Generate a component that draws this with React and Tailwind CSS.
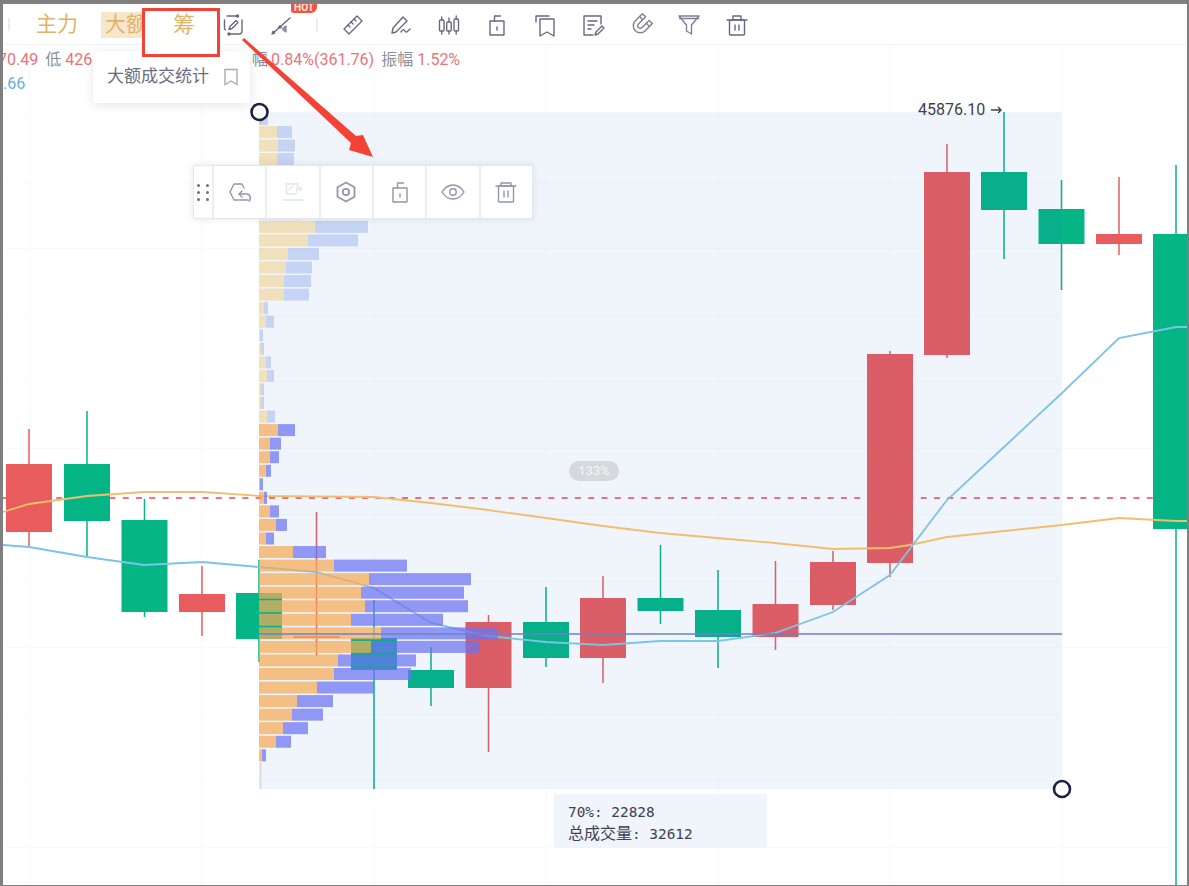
const candles = [
  [29, 464, 532, 429, 547, 'r'], [87, 464, 521, 411, 557, 'g'], [144.5, 520, 612, 499, 617, 'g'],
  [202, 594, 612, 566, 636, 'r'], [259, 593, 639, 560, 662, 'g'], [316.5, 636, 638, 512, 656, 'r'],
  [374, 638, 670, 600, 789, 'g'], [431, 670, 688, 647, 706, 'g'], [488.5, 622, 688, 615, 752, 'r'],
  [546, 622, 658, 587, 667, 'g'], [603, 598, 658, 576, 683, 'r'], [660.5, 598, 611, 545, 624, 'g'],
  [718, 610, 637, 570, 668, 'g'], [775.5, 604, 637, 561, 650, 'r'], [833, 562, 605, 551, 610, 'r'],
  [890, 354, 563, 351, 577, 'r'], [947, 172, 355, 144, 358, 'r'], [1004, 172, 210, 112, 259, 'g'],
  [1061.5, 209, 244, 180, 290, 'g'], [1119, 234, 244, 177, 255, 'r'], [1176, 234, 529, 165, 886, 'g'],
];

const rows = [
  [277, 292], [278, 295], [277, 294], [277, 292], [277, 293], [278, 296], [278, 300], [315, 368],
  [308, 358], [288, 319], [286, 312], [284, 311], [284, 309], [264, 268], [266, 274], [260, 263],
  [261, 264], [266, 271], [267, 274], [261, 264], [261, 264], [267, 275], [278, 295], [270, 281],
  [270, 279], [266, 271], [260, 263], [264, 267], [270, 279], [276, 287], [266, 274], [293, 326],
  [334, 407], [369, 471], [361, 464], [365, 468], [351, 443], [381, 498], [371, 480], [338, 416],
  [334, 411], [317, 374], [297, 333], [292, 323], [283, 308], [276, 291], [262, 266],
];

const maOrange = '3,512 29,504 87,496 144,492 203,492 260,496 374,497 431,503 488,510 546,518 603,526 660,533 717,538 775,543 833,549 890,548 910,545 947,537 1004,531 1062,525 1119,518 1176,521 1189,521';
const maBlue = '3,545 29,547 87,557 144,565 202,562 259,567 316,572 374,588 431,623 488,636 546,642 603,645 660,641 718,641 775,633 833,612 890,575 947,500 1004,447 1062,393 1119,338 1176,327 1189,327';

const gridX = [29, 201, 374, 546, 718, 890, 1062];
const gridY = [115, 182, 248, 315, 381, 448, 514, 581, 647, 714, 780, 847];

function Chart() {
  return (
    <svg className="absolute inset-0" width="1189" height="886" viewBox="0 0 1189 886">
      {gridX.map((x) => <rect key={x} x={x} y="45" width="1" height="841" fill="#f9fafb" />)}
      {gridY.map((y) => <rect key={y} x="0" y={y} width="1189" height="1" fill="#f9fafb" />)}
      <line x1="3" y1="498" x2="1189" y2="498" stroke="#f0434f" strokeWidth="1.4" strokeDasharray="6 7.3" />
      {candles.map(([c, t, b, wt, wb, k]) => {
        const col = k === 'r' ? '#e95c5e' : '#05b586';
        return (
          <g key={c} fill={col}>
            <rect x={c - 0.75} y={wt} width="1.5" height={wb - wt} />
            <rect x={c - 23} y={t} width="46" height={b - t} />
          </g>
        );
      })}
      <rect x="259" y="112" width="803" height="677" fill="#2e6fdb" opacity="0.07" />
      <polyline points={maOrange} fill="none" stroke="#f2bd6c" strokeWidth="1.8" />
      <polyline points={maBlue} fill="none" stroke="#7cc3e8" strokeWidth="1.8" />
      <rect x="259" y="113" width="9" height="12" fill="#93acec" opacity="0.45" />
      <rect x="259" y="113" width="3" height="12" fill="#f2c870" opacity="0.45" />
      {rows.map(([o, p], i) => {
        const y = 126 + 13.55 * i;
        const strong = i >= 22;
        return (
          <g key={i} opacity={strong ? 0.72 : 0.45}>
            <rect x="259" y={y} width={o - 259} height="12" fill={strong ? '#f6ab57' : '#f2c870'} />
            <rect x={o} y={y} width={p - o} height="12" fill={strong ? '#6d73f2' : '#93acec'} />
          </g>
        );
      })}
      <rect x="259.5" y="762" width="2" height="27" fill="#d9dce0" />
      <line x1="259" y1="634" x2="1062" y2="634" stroke="#6b82c8" strokeWidth="1.5" />
      <circle cx="259.5" cy="112" r="8" fill="#fff" stroke="#1e2440" strokeWidth="2.6" />
      <circle cx="1062" cy="789" r="8" fill="#fff" stroke="#1e2440" strokeWidth="2.6" />
    </svg>
  );
}

function Ic({ children, size = 24, color = '#666a80' }) {
  return (
    <svg width={size} height={size} viewBox="0 0 24 24" fill="none" stroke={color} strokeWidth="1.4" strokeLinejoin="round" strokeLinecap="round">
      {children}
    </svg>
  );
}

const topIcons = [
  <Ic key="a"><path d="M6 3h10" /><circle cx="16.5" cy="3" r="1.1" fill="#666a80" /><path d="M3.5 7v8a2 2 0 0 0 1 2" /><path d="M8 21h10a3 3 0 0 0 3-3V7" /><circle cx="8" cy="21" r="1.1" fill="#666a80" /><path d="M8 16.5l1-3 6-6 2 2-6 6z" /></Ic>,
  <Ic key="b"><path d="M3 21L21 5" /><circle cx="4.5" cy="19.5" r="1.1" fill="#666a80" /><circle cx="11" cy="14" r="1.1" fill="#666a80" /><path d="M14 15l3-2v6l-3-2z" fill="#8c90a2" stroke="#8c90a2" /></Ic>,
];

const rightIcons = [
  <Ic key="c"><path d="M3 16L16 3l5 5L8 21z" /><path d="M7 12l2 2M10 9l2 2M13 6l2 2" /></Ic>,
  <Ic key="d"><path d="M3 20l1-5L14 4l4 4L7 19z" /><path d="M12 19c2-3 3-3 4-1s2 1 5-2" /></Ic>,
  <Ic key="e"><rect x="2.5" y="7" width="4.5" height="11" rx="1" /><path d="M4.7 4v3M4.7 18v3" /><rect x="9.7" y="9" width="4.5" height="9" rx="1" /><path d="M12 5v4M12 18v3" /><rect x="17" y="6" width="4.5" height="12" rx="1" /><path d="M19.2 3v3M19.2 18v3" /></Ic>,
  <Ic key="f"><rect x="5" y="8" width="14" height="14" /><path d="M9.5 8V3h6" /><path d="M12 14v3" /></Ic>,
  <Ic key="g"><path d="M3 9V3h13" /><path d="M7 6h14v17l-7-4-7 4z" /></Ic>,
  <Ic key="h"><path d="M20 11V3H3v19h9" /><path d="M7 8h9M7 12h6M7 16h3" /><path d="M14 22l1-3 6-6 2 2-6 6z" /></Ic>,
  <Ic key="i" color="#7d8194"><g transform="rotate(45 12 12)"><path d="M5 3h4.5v10a2.5 2.5 0 0 0 5 0V3H19v10a7 7 0 0 1-14 0z" /><path d="M5 7h4.5M14.5 7H19" /></g></Ic>,
  <Ic key="j" color="#7d8194"><path d="M2 3h20l-7.5 9v9l-5-3v-6z" /><path d="M2.5 5.5h19" /></Ic>,
  <Ic key="k"><path d="M2 7h20" /><path d="M8 7V3h8v4" /><rect x="4.5" y="7" width="15" height="15" rx="1" /><path d="M10 12v5M14 12v5" /></Ic>,
];

function Toolbar() {
  return (
    <div className="relative flex h-[45px] items-center border-b border-[#f1f2f5] bg-white pt-[5px] text-[21px] text-[#e0b36b]">
      <div className="ml-[8px] h-[13px] w-[2px] bg-[#e8edf5]" />
      <span className="ml-[26px] w-[65px] leading-none">主力</span>
      <span className="flex h-[26px] w-[47px] items-center overflow-hidden whitespace-nowrap bg-[#f6e7cc] pl-[4px] leading-none">大额</span>
      <div className="ml-[61px] flex">
        {topIcons.map((ic) => (
          <div key={ic.key} className="flex w-12 items-center justify-center">{ic}</div>
        ))}
      </div>
      <div className="ml-[11px] h-[13px] w-[2px] bg-[#e8edf5]" />
      <div className="ml-[11px] flex">
        {rightIcons.map((ic) => (
          <div key={ic.key} className="flex w-12 items-center justify-center">{ic}</div>
        ))}
      </div>
    </div>
  );
}

function Stats() {
  const red = 'text-[#ea7378]';
  const gray = 'text-[#8b8f99]';
  return (
    <div className="relative text-[16px] leading-[24px]">
      <div className="mt-[3px] flex h-[24px] whitespace-nowrap">
        <div className="-ml-[2px] flex w-[254px] gap-[7px] overflow-hidden">
          <span className={red}>70.49</span>
          <span><span className={gray}>低</span> <span className={red}>42618.50</span></span>
        </div>
        <span className={gray}>幅</span>
        <span className={`${red} ml-[3px]`}>0.84%(361.76)</span>
        <span className={`${gray} ml-[7px]`}>振幅</span>
        <span className={`${red} ml-[4px]`}>1.52%</span>
      </div>
      <div className="ml-[3px] text-[#5fb3dc]">.66</div>
    </div>
  );
}

function Tooltip() {
  return (
    <div className="absolute left-[93px] top-[51px] flex h-[52px] w-[157px] items-center justify-between bg-white pl-[14px] pr-[11px] text-[17px] text-[#696e80] shadow-[0_2px_10px_rgba(40,50,80,0.12)]">
      <span className="whitespace-nowrap">大额成交统计</span>
      <svg width="16" height="18" viewBox="0 0 16 18" fill="none" stroke="#a9adb9" strokeWidth="1.4"><path d="M2 1.5h12v15l-6-3.5-6 3.5z" /></svg>
    </div>
  );
}

const flC = '#9397a7';
const floatIcons = [
  <Ic key="a" color={flC}><path d="M11 4H6l-4 8 4 8h5" /><path d="M11 4h3l2 4" /><path d="M21 21c2-1 2-7-2-7h-8" /><path d="M14 11l-3 3 3 3" /><path d="M12 20h8" /></Ic>,
  <Ic key="b" color="#dfe5f1"><path d="M5 4h12l-2 10H6z" /><path d="M8 10l4-4" /><path d="M17 9h4M19 7v4" /><path d="M2 20h20" /></Ic>,
  <Ic key="c" color={flC}><path d="M12 2.5l8.5 4.8v9.4L12 21.5l-8.5-4.8V7.3z" strokeWidth="1.8" /><circle cx="12" cy="12" r="3.2" strokeWidth="1.8" /></Ic>,
  <Ic key="d" color={flC}><rect x="5" y="8" width="14" height="14" /><path d="M9.5 8V3h6" /><path d="M12 14v3" /></Ic>,
  <Ic key="e" color={flC}><path d="M1 12c3-5 7-7 11-7s8 2 11 7c-3 5-7 7-11 7s-8-2-11-7z" /><circle cx="12" cy="12" r="3.2" /></Ic>,
  <Ic key="f" color={flC}><path d="M2 6h20" /><path d="M7 6V3h10v3" /><rect x="4.5" y="6" width="15" height="16" rx="1" /><path d="M10 11v6M14 11v6" /></Ic>,
];

function FloatBar() {
  return (
    <div className="absolute left-[193px] top-[165px] flex h-[54px] w-[340px] border border-[#e4e7ee] bg-white shadow-[0_0_8px_rgba(60,70,100,0.12)]">
      <div className="grid w-[18px] grid-cols-2 content-center justify-center gap-x-[3px] gap-y-[4px] pl-[3px]">
        {[0, 1, 2, 3, 4, 5].map((i) => <span key={i} className="h-[3px] w-[3px] rounded-full bg-[#6b7080]" />)}
      </div>
      {floatIcons.map((ic) => (
        <div key={ic.key} className="flex flex-1 items-center justify-center border-l-2 border-[#eceef2]">{ic}</div>
      ))}
    </div>
  );
}

export default function App() {
  return (
    <div className="relative h-[886px] w-[1189px] overflow-hidden bg-white font-['Roboto','Noto_Sans_CJK_SC',sans-serif]">
      <Chart />
      <Toolbar />
      <Stats />
      <Tooltip />
      <FloatBar />

      <div className="absolute left-[291px] top-0 flex h-[13px] w-[26px] items-end justify-center rounded-bl-[3px] rounded-br-[6px] bg-[#f2553d] text-[10px] font-bold leading-none text-[#ffe9e4]">HOT</div>

      <div className="absolute left-[569px] top-[461px] flex h-[20px] w-[50px] items-center justify-center rounded-full bg-[#d5d8dc] text-[13px] text-[#f4f5f6]">133%</div>

      <div className="absolute left-[918px] top-[100px] flex items-center whitespace-nowrap text-[16px] leading-[20px] text-[#3c4150]">
        45876.10
        <svg className="ml-[6px]" width="11" height="8" viewBox="0 0 11 8" fill="none" stroke="#3c4150" strokeWidth="1.4"><path d="M0 4h10M7 1l3 3-3 3" /></svg>
      </div>

      <div className="absolute left-[554px] top-[794px] h-[54px] w-[213px] bg-[#f0f5fc] pl-[14px] pt-[8px] font-['DejaVu_Sans_Mono','Noto_Sans_CJK_SC',monospace] text-[14.4px] leading-[21px] text-[#3c4150]">
        <div>70%: 22828</div>
        <div><span className="text-[16px]">总成交量</span>: 32612</div>
      </div>

      <div className="absolute left-[142px] top-[8px] h-[49px] w-[78px] border-[3px] border-[#f44336] bg-white">
        <span className="absolute left-[28px] top-[1px] text-[22px] leading-[26px] text-[#e0b36b]">筹</span>
      </div>

      <svg className="absolute left-0 top-0" width="400" height="170" viewBox="0 0 400 170">
        <polygon points="242,40 244,38 356,136 363,135 373,157 349,150 351,143" fill="#f44336" />
      </svg>

      <div className="absolute inset-0 border-b border-l-[3px] border-r-2 border-t-4 border-[#7f7f7f]" />
    </div>
  );
}
